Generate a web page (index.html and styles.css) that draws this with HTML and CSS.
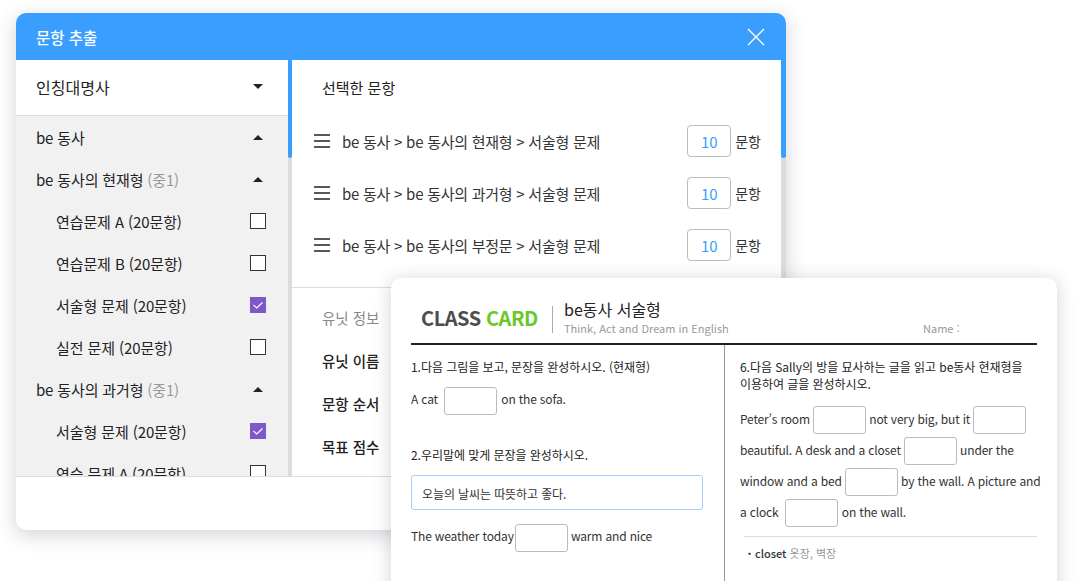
FILE: index.html
```html
<!DOCTYPE html>
<html lang="ko">
<head>
    <meta charset="UTF-8">
    <meta name="viewport" content="width=device-width, initial-scale=1.0">
    <title>문항 추출</title>
    <link rel="stylesheet" href="styles.css">
</head>
<body>
<div class="page">

    <div class="modal">
        <div class="modal-head">
            <h1>문항 추출</h1>
            <svg class="close" width="18" height="18" viewBox="0 0 18 18"><path d="M1 1L17 17M17 1L1 17" stroke="#fff" stroke-width="1.4" fill="none"/></svg>
        </div>
        <div class="modal-body">
            <div class="side">
                <div class="side-top">
                    <span>인칭대명사</span>
                    <i class="caret down"></i>
                </div>
                <div class="tree">
                    <div class="row"><span>be 동사</span><i class="caret"></i></div>
                    <div class="row"><span>be 동사의 현재형 <em>(중1)</em></span><i class="caret"></i></div>
                    <div class="row sub"><span>연습문제 A (20문항)</span><i class="check"></i></div>
                    <div class="row sub"><span>연습문제 B (20문항)</span><i class="check"></i></div>
                    <div class="row sub"><span>서술형 문제 (20문항)</span>
                        <i class="check on"><svg width="16" height="16" viewBox="0 0 16 16"><path d="M3.5 8L6.8 11L12.5 5.5" stroke="#fff" stroke-width="1.2" fill="none"/></svg></i>
                    </div>
                    <div class="row sub"><span>실전 문제 (20문항)</span><i class="check"></i></div>
                    <div class="row"><span>be 동사의 과거형 <em>(중1)</em></span><i class="caret"></i></div>
                    <div class="row sub"><span>서술형 문제 (20문항)</span>
                        <i class="check on"><svg width="16" height="16" viewBox="0 0 16 16"><path d="M3.5 8L6.8 11L12.5 5.5" stroke="#fff" stroke-width="1.2" fill="none"/></svg></i>
                    </div>
                    <div class="row sub"><span>연습 문제 A (20문항)</span><i class="check"></i></div>
                </div>
            </div>
            <div class="bar"><div class="thumb"></div></div>
            <div class="main">
                <h2>선택한 문항</h2>
                <div class="pick">
                    <svg width="16" height="14" viewBox="0 0 16 14"><path d="M0 1H16M0 7H16M0 13H16" stroke="#222" stroke-width="1.5" fill="none"/></svg>
                    <span class="pick-name">be 동사 &gt; be 동사의 현재형 &gt; 서술형 문제</span>
                    <input class="count" value="10">
                    <span>문항</span>
                </div>
                <div class="pick">
                    <svg width="16" height="14" viewBox="0 0 16 14"><path d="M0 1H16M0 7H16M0 13H16" stroke="#222" stroke-width="1.5" fill="none"/></svg>
                    <span class="pick-name">be 동사 &gt; be 동사의 과거형 &gt; 서술형 문제</span>
                    <input class="count" value="10">
                    <span>문항</span>
                </div>
                <div class="pick">
                    <svg width="16" height="14" viewBox="0 0 16 14"><path d="M0 1H16M0 7H16M0 13H16" stroke="#222" stroke-width="1.5" fill="none"/></svg>
                    <span class="pick-name">be 동사 &gt; be 동사의 부정문 &gt; 서술형 문제</span>
                    <input class="count" value="10">
                    <span>문항</span>
                </div>
                <div class="unit">
                    <div class="unit-title">유닛 정보</div>
                    <div class="unit-row">유닛 이름</div>
                    <div class="unit-row">문항 순서</div>
                    <div class="unit-row">목표 점수</div>
                </div>
            </div>
            <div class="bar wide"><div class="thumb"></div></div>
        </div>
        <div class="modal-foot"></div>
    </div>

    <div class="card">
        <div class="card-head">
            <div class="logo">CLASS <b>CARD</b></div>
            <div class="card-title">
                <strong>be동사 서술형</strong>
                <small>Think, Act and Dream in English</small>
            </div>
            <div class="name">Name :</div>
        </div>
        <div class="card-body">
            <div class="col left">
                <p class="q">1.다음 그림을 보고, 문장을 완성하시오. (현재형)</p>
                <div class="line first">A cat <i class="blank gap"></i> on the sofa.</div>
                <p class="q second">2.우리말에 맞게 문장을 완성하시오.</p>
                <div class="hint">오늘의 날씨는 따뜻하고 좋다.</div>
                <div class="line">The weather today<i class="blank tight"></i> warm and nice</div>
            </div>
            <div class="col right">
                <p class="q">6.다음 Sally의 방을 묘사하는 글을 읽고 be동사 현재형을<br>이용하여 글을 완성하시오.</p>
                <div class="para">
                    <div class="line">Peter’s room <i class="blank"></i> not very big, but it <i class="blank"></i></div>
                    <div class="line">beautiful. A desk and a closet <i class="blank"></i> under the</div>
                    <div class="line">window and a bed <i class="blank"></i> by the wall. A picture and</div>
                    <div class="line">a clock <i class="blank gap"></i> on the wall.</div>
                </div>
                <div class="note"><span class="dot">・</span><b>closet</b> <span>옷장, 벽장</span></div>
            </div>
        </div>
    </div>

</div>
</body>
</html>
```

FILE: styles.css
```css
* {
    box-sizing: border-box;
}

body {
    margin: 0;
    background: #fff;
    color: #222;
    font-family: "Noto Sans CJK KR", "Noto Sans", sans-serif;
}

.page {
    position: relative;
    height: 581px;
    overflow: hidden;
    padding: 13px 0 0 16px;
}

/* modal */
.modal {
    width: 770px;
    height: 517px;
    display: flex;
    flex-direction: column;
    border-radius: 10px;
    background: #fff;
    box-shadow: 0 5px 20px rgba(40, 50, 70, 0.22);
    overflow: hidden;
}

.modal-head {
    flex: 0 0 47px;
    display: flex;
    align-items: center;
    justify-content: space-between;
    padding: 0 21px 0 20px;
    background: #3a9eff;
}

.modal-head h1 {
    margin: 0;
    color: #fff;
    font-size: 15.5px;
    font-weight: 500;
}

.modal-body {
    flex: 1;
    display: flex;
    min-height: 0;
}

.modal-foot {
    flex: 0 0 54px;
    border-top: 1px solid #ddd;
}

/* left tree */
.side {
    width: 272px;
    display: flex;
    flex-direction: column;
}

.side-top {
    flex: 0 0 56px;
    display: flex;
    align-items: center;
    justify-content: space-between;
    padding: 0 25px 2px 20px;
    border-bottom: 1px solid #ddd;
    font-size: 16px;
}

.tree {
    flex: 1;
    overflow: hidden;
    background: #f1f1f2;
}

.row {
    height: 42px;
    display: flex;
    align-items: center;
    justify-content: space-between;
    padding: 0 25px 0 20px;
    font-size: 15px;
    letter-spacing: -0.15px;
}

.row.sub {
    padding: 0 22px 0 40px;
    letter-spacing: -0.1px;
}

.row em {
    color: #999;
    font-style: normal;
}

.caret {
    width: 0;
    height: 0;
    border-left: 5px solid transparent;
    border-right: 5px solid transparent;
    border-bottom: 5px solid #222;
}

.caret.down {
    border-bottom: 0;
    border-top: 5px solid #222;
}

.check {
    width: 16px;
    height: 16px;
    border: 1px solid #333;
    background: #fff;
}

.check.on {
    display: flex;
    border: 0;
    background: #7e57c9;
}

/* scrollbars */
.bar {
    flex: 0 0 4px;
    background: #dcdcdc;
}

.bar.wide {
    flex-basis: 5px;
}

.thumb {
    height: 98px;
    border-radius: 0 0 3px 3px;
    background: #3a9eff;
}

/* right side */
.main {
    flex: 1;
    min-width: 0;
}

.main h2 {
    margin: 0;
    height: 55px;
    padding: 0 0 0 30px;
    line-height: 56px;
    font-size: 15px;
    font-weight: 400;
}

.pick {
    height: 52px;
    display: flex;
    align-items: center;
    padding: 0 20px 0 22px;
    font-size: 14px;
    color: #333;
}

.pick-name {
    flex: 1;
    margin-left: 12px;
    font-size: 15px;
    letter-spacing: -0.25px;
}

.count {
    width: 44px;
    height: 32px;
    margin-right: 4px;
    border: 1px solid #bbb;
    border-radius: 4px;
    outline: 0;
    padding: 0;
    color: #3a9eff;
    text-align: center;
    font-family: inherit;
    font-size: 15px;
}

.unit {
    margin-top: 16px;
    border-top: 1px solid #ddd;
    padding: 8px 0 0 30px;
}

.unit-title {
    height: 43px;
    line-height: 43px;
    color: #888;
    font-size: 14.5px;
}

.unit-row {
    height: 43px;
    line-height: 43px;
    font-size: 14.5px;
    font-weight: 500;
}

/* worksheet card */
.card {
    position: absolute;
    left: 391px;
    top: 278px;
    width: 666px;
    height: 340px;
    padding: 0 20px;
    border-radius: 10px;
    background: #fff;
    box-shadow: 0 2px 18px rgba(40, 50, 70, 0.22);
}

.card-head {
    height: 67px;
    display: flex;
    align-items: flex-end;
    border-bottom: 2px solid #222;
    padding: 0 0 7px 10px;
}

.logo {
    width: 132px;
    height: 27px;
    line-height: 23px;
    margin-bottom: 3px;
    border-right: 1px solid #aaa;
    color: #4d4d4d;
    font-size: 20px;
    font-weight: 700;
    letter-spacing: -0.45px;
    white-space: nowrap;
}

.logo b {
    color: #6cc72a;
    font-weight: 700;
}

.card-title {
    width: 370px;
    padding-left: 11px;
    display: flex;
    flex-direction: column;
}

.card-title strong {
    font-size: 16px;
    font-weight: 400;
    line-height: 22px;
}

.card-title small,
.name {
    color: #999;
    font-size: 11px;
    line-height: 16px;
}

.card-body {
    display: flex;
    height: 275px;
    font-size: 12px;
    color: #333;
}

.col.left {
    flex: 0 0 314px;
    padding-right: 21px;
    border-right: 1px solid #999;
}

.col.right {
    flex: 1;
    min-width: 0;
    padding-left: 15px;
}

.q {
    margin: 13px 0 0;
    line-height: 17px;
    color: #222;
    letter-spacing: -0.05px;
}

.q.second {
    margin-top: 31px;
}

.line {
    height: 28px;
    display: flex;
    align-items: flex-start;
    line-height: 25px;
    letter-spacing: -0.17px;
    white-space: pre;
}

.col.left .line {
    line-height: 24px;
}

.line.first {
    margin-top: 12px;
}

.blank {
    flex: 0 0 53px;
    height: 28px;
    border: 1px solid #bbb;
    border-radius: 3px;
    background: #fff;
}

.blank.tight {
    margin-left: 1px;
}

.blank.gap {
    margin: 0 1px 0 3px;
}

.hint {
    height: 35px;
    margin: 12px 0 14px;
    padding-left: 10px;
    line-height: 35px;
    border: 1px solid #a5d0fb;
    border-radius: 3px;
    letter-spacing: -0.1px;
}

.para {
    margin-top: 14px;
    display: flex;
    flex-direction: column;
    gap: 3px;
}

.note {
    margin: 9px 0 0 4px;
    padding: 8px 0 0 0;
    border-top: 1px solid #ddd;
    font-size: 11px;
    line-height: 16px;
}

.note b {
    font-weight: 500;
}

.note span:last-child {
    color: #999;
}
```
